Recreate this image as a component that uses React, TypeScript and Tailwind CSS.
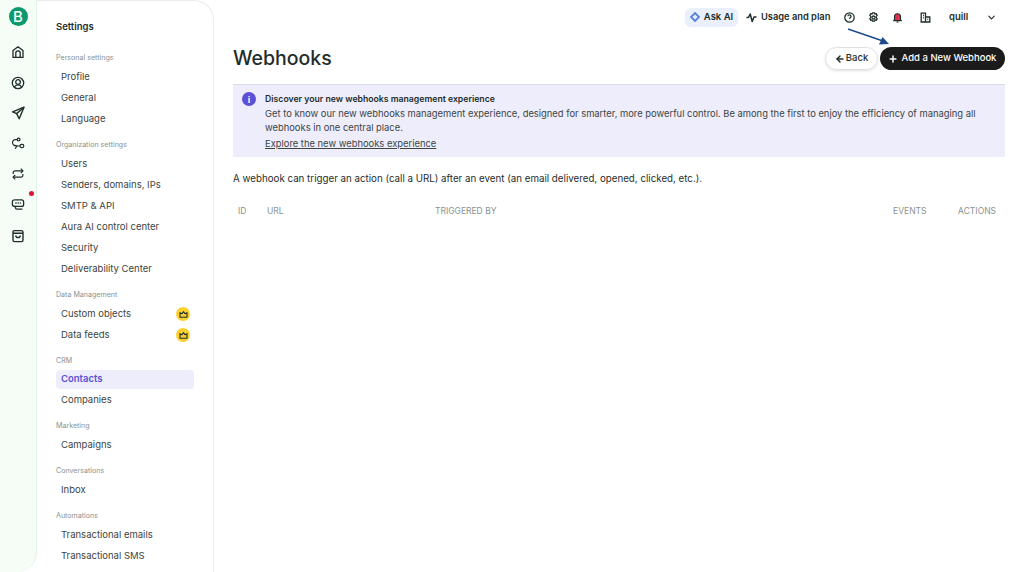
import { ChevronDown, Plus, ArrowLeft } from "lucide-react";

const sections = [
  { label: "Personal settings", items: ["Profile", "General", "Language"] },
  { label: "Organization settings", items: ["Users", "Senders, domains, IPs", "SMTP & API", "Aura AI control center", "Security", "Deliverability Center"] },
  { label: "Data Management", items: ["Custom objects", "Data feeds"] },
  { label: "CRM", items: ["Contacts", "Companies"] },
  { label: "Marketing", items: ["Campaigns"] },
  { label: "Conversations", items: ["Inbox"] },
  { label: "Automations", items: ["Transactional emails", "Transactional SMS"] },
];

const Rail = () => (
  <div className="w-[37px] h-[572px] shrink-0 bg-[#f5fdf6] border-r border-[#dff3ea] rounded-br-[20px] flex flex-col items-center text-[#1f2d2b]">
    <div className="mt-[7px] mb-[19px] w-[19px] h-[19px] rounded-full bg-[#0b996e] flex items-center justify-center text-white text-[15px] font-medium leading-none">B</div>
    <div className="flex flex-col items-center gap-[16.6px]">
      <svg width="14" height="14" viewBox="0 0 14 14" fill="none" stroke="currentColor" strokeWidth="1.3" strokeLinejoin="round"><path d="M2 5.6 7 1.8l5 3.8v6.8H2z" /><path d="M4.8 12.4V8a2.2 2.2 0 0 1 4.4 0v4.4" /></svg>
      <svg width="14" height="14" viewBox="0 0 14 14" fill="none" stroke="currentColor" strokeWidth="1.3"><circle cx="7" cy="7" r="5.7" /><circle cx="7" cy="6" r="2.3" /><path d="M3.2 11.2c.8-1.5 2.2-2.3 3.8-2.3s3 .8 3.8 2.3" /></svg>
      <svg width="14" height="14" viewBox="0 0 14 14" fill="none" stroke="currentColor" strokeWidth="1.4" strokeLinejoin="round"><path d="M13 1.2 1.6 5.8l4 1.8 2.6 5.2z" /><path d="M13 1.2 5.6 7.6" /></svg>
      <svg width="14" height="14" viewBox="0 0 14 14" fill="none" stroke="currentColor" strokeWidth="1.2"><circle cx="7.6" cy="2.6" r="1.4" /><rect x="9" y="7.4" width="3.8" height="3.2" rx="1.5" /><path d="M6.2 2.6H4.4a3 3 0 0 0-2.2 5c.8 1 2.2 1.4 3.4 1.4H9" /><path d="M4.2 11.8 5.8 9 3.4 8" /></svg>
      <svg width="14" height="14" viewBox="0 0 14 14" fill="none" stroke="currentColor" strokeWidth="1.2" strokeLinejoin="round"><path d="M2.2 7V5.6A1.8 1.8 0 0 1 4 3.8h7.8" /><path d="M9.8 1.6 12 3.8 9.8 6" /><path d="M11.8 7v1.4A1.8 1.8 0 0 1 10 10.2H2.2" /><path d="M4.2 8 2 10.2l2.2 2.2" /></svg>
      <div className="relative">
        <svg width="14" height="14" viewBox="0 0 14 14" fill="none" stroke="currentColor" strokeWidth="1.3" strokeLinejoin="round"><path d="M3.4 1.8h7.2a2 2 0 0 1 2 2v2.6a2 2 0 0 1-2 2H4.4v1.2c0 .9.7 1.6 1.6 1.6h5.4" /><path d="M3.4 1.8a2 2 0 0 0-2 2v2.6c0 1.3.8 2 3 2" /><path d="M4.4 5h5.4" strokeDasharray="1.2 1" /></svg>
        <div className="absolute top-[-7px] left-[18px] w-[5px] h-[5px] rounded-full bg-[#e0103a]" />
      </div>
      <svg width="14" height="14" viewBox="0 0 14 14" fill="none" stroke="currentColor" strokeWidth="1.4" strokeLinejoin="round"><rect x="2" y="1.6" width="10" height="11" rx="1.6" /><path d="M2 4.2h10M4.8 6.4c0 2.8 4.4 2.8 4.4 0" /></svg>
    </div>
  </div>
);

const Sidebar = () => (
  <div className="w-[177px] h-[572px] shrink-0 bg-white border-r border-t border-[#e8edeb] rounded-tr-[20px] pl-[19px] pr-[19px] overflow-hidden">
    <div className="h-[51px] pt-[18px] text-[9.5px] leading-[15px] font-semibold text-[#1f2d2b]">Settings</div>
    {sections.map((s) => (
      <div key={s.label} className="mb-[9.5px]">
        <div className="h-[12px] mb-[2.5px] text-[7.1px] leading-[12px] text-[#8a9291]">{s.label}</div>
        {s.items.map((item) =>
          item === "Contacts" ? (
            <div key={item} className="h-[19px] my-[1px] flex items-center pl-[5px] rounded-[4px] bg-[#eeedfb] text-[9.5px] font-semibold text-[#5b50d6]">
              {item}
            </div>
          ) : (
            <div key={item} className="h-[21px] flex items-center justify-between pl-[5px] pr-[4px] text-[9.5px] text-[#3b4543]">
              <span>{item}</span>
              {(item === "Custom objects" || item === "Data feeds") && (
                <span className="w-[14px] h-[14px] rounded-full bg-[#ffd12e] flex items-center justify-center">
                  <svg width="9" height="9" viewBox="0 0 9 9" fill="none" stroke="#1f2d2b" strokeWidth="1.1" strokeLinejoin="round"><path d="M1 2.6 3 3.8 4.5 1.6 6 3.8 8 2.6v4.6H1z" /></svg>
                </span>
              )}
            </div>
          )
        )}
      </div>
    ))}
  </div>
);

const TopBar = () => (
  <div className="h-[34px] flex items-center justify-end text-[9.5px] font-semibold text-[#1f2d2b]">
    <div className="flex items-center justify-center gap-[4px] w-[53px] h-[19px] rounded-[6px] bg-[#e9effb]">
      <svg width="10" height="10" viewBox="0 0 10 10"><path d="M5 1 9 5 5 9 1 5z" fill="none" stroke="#5b7fe0" strokeWidth="1.8" /></svg>
      <span>Ask AI</span>
    </div>
    <svg width="11" height="11" viewBox="0 0 11 11" fill="none" stroke="currentColor" strokeWidth="1.5" strokeLinejoin="round" className="ml-[7.5px] mr-[4.5px]"><path d="M0.5 5.5h2L4.2 2l2 7.5L8 5h2.5" /></svg>
    <span className="w-[69px] whitespace-nowrap text-[9.3px]">Usage and plan</span>
    <svg width="11" height="11" viewBox="0 0 11 11" fill="none" stroke="currentColor" strokeWidth="1.3" className="ml-[13.5px]"><circle cx="5.5" cy="5.5" r="4.7" /><path d="M4 4.3a1.5 1.5 0 1 1 2.3 1.3c-.5.3-.8.5-.8 1.1M5.5 8v.3" /></svg>
    <svg width="11" height="11" viewBox="0 0 11 11" fill="none" stroke="currentColor" strokeWidth="1.3" strokeLinejoin="round" className="ml-[13px]"><path d="M4.5.8h2l.4 1.3 1.3-.4 1 1.700-1 1 0 1.200 1 1-1 1.700-1.300-.4-.4 1.300h-2l-.4-1.300-1.300.4-1-1.700 1-1 0-1.200-1-1 1-1.700 1.300.4z" /><circle cx="5.5" cy="5.5" r="1.5" /></svg>
    <svg width="11" height="11" viewBox="0 0 11 11" className="ml-[13px]"><path d="M2.5 7.600V4.800a3 3 0 0 1 6 0v2.800l.9 1H1.600z" fill="#e0304f" stroke="currentColor" strokeWidth="1.1" strokeLinejoin="round" /><path d="M4.5 10h2" stroke="currentColor" strokeWidth="1.1" /></svg>
    <svg width="11" height="11" viewBox="0 0 11 11" fill="none" stroke="currentColor" strokeWidth="1.3" className="ml-[17px]"><path d="M1.200 10V1.200h4.300V10M5.500 5h4.300v5M.5 10h10" /><path d="M3 3.500h.9M3 5.800h.9M7.300 7.300h.9" /></svg>
    <span className="ml-[18.5px] w-[19px]">quill</span>
    <ChevronDown size={11} strokeWidth={2.5} className="ml-[17.5px] mr-[8.5px]" />
  </div>
);

const Main = () => (
  <div className="relative flex-1 pl-[19px] pr-[19px]">
    <TopBar />
    <svg width="44" height="18" viewBox="0 0 44 18" className="absolute left-[633px] top-[28px]" fill="none" stroke="#1f4a8f" strokeWidth="1.6">
      <path d="M1 1 36 13" />
      <path d="M42 16 32 16.5 35.5 9z" fill="#1f4a8f" stroke="none" />
    </svg>
    <div className="flex items-center justify-between h-[49px] mb-[1px]">
      <h1 className="text-[19.5px] leading-[26px] mb-[1px] font-medium text-[#1f2d2b]">Webhooks</h1>
      <div className="flex items-center gap-[2px]">
        <div className="h-[23px] w-[53px] rounded-full border border-[#dfe3e2] shadow-sm flex items-center justify-center gap-[1px] text-[9.5px] font-medium text-[#1f2d2b]">
          <ArrowLeft size={10} strokeWidth={3.5} />
          <span>Back</span>
        </div>
        <div className="h-[23px] w-[125px] rounded-full bg-[#1b1b1b] flex items-center justify-center gap-[4px] pr-[1px] text-[9.5px] font-medium text-white">
          <Plus size={10} strokeWidth={3.5} />
          <span>Add a New Webhook</span>
        </div>
      </div>
    </div>
    <div className="h-[73px] bg-[#eeedfb] border-t border-[#d9dcec] flex gap-[9px] pl-[9px] pt-[7px] text-[9.4px] leading-[14px] text-[#3b4543]">
      <div className="w-[14px] h-[14px] rounded-full bg-[#5b50d6] shrink-0 flex items-center justify-center text-white text-[9px] font-bold leading-none">i</div>
      <div className="pr-[20px]">
        <div className="font-semibold text-[8.7px] mb-[0.5px] text-[#1f2d2b]">Discover your new webhooks management experience</div>
        <div>Get to know our new webhooks management experience, designed for smarter, more powerful control. Be among the first to enjoy the efficiency of managing all webhooks in one central place.</div>
        <div className="underline mt-[2px]">Explore the new webhooks experience</div>
      </div>
    </div>
    <p className="mt-[15px] text-[9.75px] leading-[14px] text-[#1f2d2b]">A webhook can trigger an action (call a URL) after an event (an email delivered, opened, clicked, etc.).</p>
    <div className="mt-[18.5px] flex text-[8.5px] leading-[12px] text-[#8a9291] pl-[5px] pr-[9px]">
      <span className="w-[29px]">ID</span>
      <span className="w-[168px]">URL</span>
      <span className="flex-1">TRIGGERED BY</span>
      <span className="w-[65px]">EVENTS</span>
      <span>ACTIONS</span>
    </div>
  </div>
);

export default function App() {
  return (
    <div className="flex w-[1024px] h-[572px] overflow-hidden bg-white font-['Inter',sans-serif]">
      <Rail />
      <Sidebar />
      <Main />
    </div>
  );
}
